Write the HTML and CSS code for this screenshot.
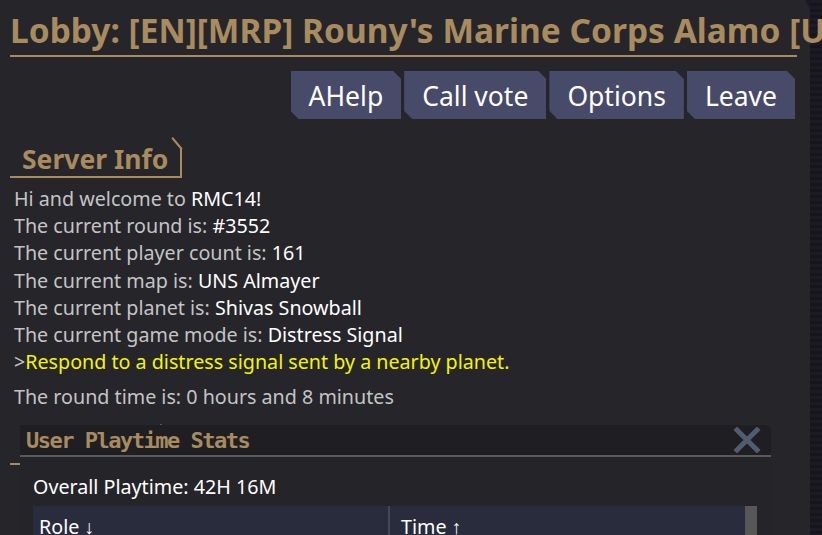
FILE: index.html
```html
<!DOCTYPE html>
<html lang="en">
<head>
  <meta charset="UTF-8" />
  <title>Lobby</title>
  <link rel="stylesheet" href="styles.css">
</head>
<body>

  <div class="lobby">
    <h1 class="lobby-title">Lobby: [EN][MRP] Rouny's Marine Corps Alamo [US East]</h1>

    <div class="actions">
      <button class="btn">AHelp</button>
      <button class="btn">Call vote</button>
      <button class="btn">Options</button>
      <button class="btn">Leave</button>
    </div>

    <h2 class="heading">Server Info</h2>
    <div class="info">
      <p>Hi and welcome to <span class="val">RMC14!</span></p>
      <p>The current round is: <span class="val">#3552</span></p>
      <p>The current player count is: <span class="val">161</span></p>
      <p>The current map is: <span class="val">UNS Almayer</span></p>
      <p>The current planet is: <span class="val">Shivas Snowball</span></p>
      <p>The current game mode is: <span class="val">Distress Signal</span></p>
      <p>&gt;<span class="desc">Respond to a distress signal sent by a nearby planet.</span></p>
      <p class="round-time">The round time is: 0 hours and 8 minutes</p>
    </div>

    <!-- next section heading, mostly hidden under the window -->
    <div class="heading heading-hidden"></div>
  </div>

  <!-- floating window over the lobby -->
  <div class="window">
    <div class="window-head">
      <span class="window-title">User Playtime Stats</span>
      <svg class="window-close" width="28" height="26" viewBox="0 0 28 26">
        <path d="M4 3 L24 23 M24 3 L4 23" stroke="#4f5d70" stroke-width="5" stroke-linecap="square" />
      </svg>
    </div>
    <div class="window-body">
      <p class="overall">Overall Playtime: 42H 16M</p>
      <div class="table">
        <div class="table-head">
          <div class="col col-role">Role ↓</div>
          <div class="col col-time">Time ↑</div>
        </div>
        <div class="scrollbar"></div>
      </div>
    </div>
  </div>

</body>
</html>
```

FILE: styles.css
```css
body {
  margin: 0;
  width: 822px;
  height: 535px;
  overflow: hidden;
  position: relative;
  font-family: 'Noto Sans', sans-serif;
  background: repeating-linear-gradient(#1d1a25 0 3px, #16141c 3px 6px);
}
.lobby {
  position: relative;
  width: 810px;
  height: 535px;
  background-color: #25252a;
  padding: 0 13px 0 10px;
  box-sizing: border-box;
}
.lobby::before {
  content: "";
  position: absolute;
  top: 0;
  right: 0;
  border-top: 9px solid #1b1922;
  border-left: 5px solid transparent;
}
.lobby-title {
  margin: 0;
  padding-top: 10px;
  height: 45px;
  font-size: 33.5px;
  line-height: 40px;
  font-weight: bold;
  color: #a88b5e;
  white-space: nowrap;
  border-bottom: 2px solid #a88b5e;
}
.actions {
  display: flex;
  justify-content: flex-end;
  gap: 3px;
  margin: 14px 2px 0 0;
}
.btn {
  height: 48px;
  padding: 2px 18px 0;
  border: none;
  background-color: #474a69;
  color: #fff;
  font-family: 'Noto Sans', sans-serif;
  font-size: 26.5px;
  clip-path: polygon(0 0, calc(100% - 8px) 0, 100% 8px, 100% 100%, 8px 100%, 0 calc(100% - 8px));
}
.heading {
  position: relative;
  display: inline-block;
  margin: 18px 0 0;
  padding: 0 14px 0 12px;
  height: 39px;
  line-height: 44px;
  font-size: 26.5px;
  font-weight: bold;
  color: #a88b5e;
  border-bottom: 2px solid #a88b5e;
}
.heading::after {
  content: "";
  position: absolute;
  right: 0;
  top: 12px;
  bottom: 0;
  width: 2px;
  background-color: #a88b5e;
}
.heading::before {
  content: "";
  position: absolute;
  right: 4px;
  top: -1px;
  width: 2px;
  height: 15px;
  background-color: #a88b5e;
  transform: rotate(-40deg);
}
.heading-hidden {
  display: block;
  margin-top: 13px;
  width: 134px;
}
.info {
  margin-top: 7px;
  padding-left: 4px;
  font-size: 19.7px;
  line-height: 27.2px;
  color: #c4c4c4;
}
.info p {
  margin: 0;
}
.val {
  color: #fff;
}
.desc {
  color: #f5f500;
}
.info .round-time {
  margin-top: 8px;
}
.window {
  position: absolute;
  left: 20px;
  top: 425px;
  width: 751px;
  bottom: 0;
  background-color: #252429;
}
.window-head {
  display: flex;
  align-items: center;
  justify-content: space-between;
  height: 30px;
  padding: 0 10px 0 6px;
  background-color: #1f1e23;
  border-bottom: 2px solid #5a5a5a;
  border-top-right-radius: 6px;
}
.window-title {
  font-family: 'DejaVu Sans Mono', monospace;
  font-weight: bold;
  font-size: 22px;
  letter-spacing: -1.5px;
  color: #a88b5e;
}
.window-body {
  padding: 17px 14px 0 13px;
}
.overall {
  margin: 0;
  font-size: 19.7px;
  line-height: 26px;
  color: #fff;
}
.table {
  display: flex;
  margin-top: 6px;
}
.table-head {
  display: flex;
  width: 712px;
  height: 40px;
  background-color: #292c3c;
}
.col {
  padding: 7px 6px 5px;
  font-size: 19.7px;
  color: #fff;
}
.col-role {
  width: 343px;
  border-right: 2px solid #44475a;
}
.col-time {
  flex: 1;
  padding-left: 11px;
}
.scrollbar {
  width: 12px;
  height: 40px;
  background-color: #575757;
}
```
